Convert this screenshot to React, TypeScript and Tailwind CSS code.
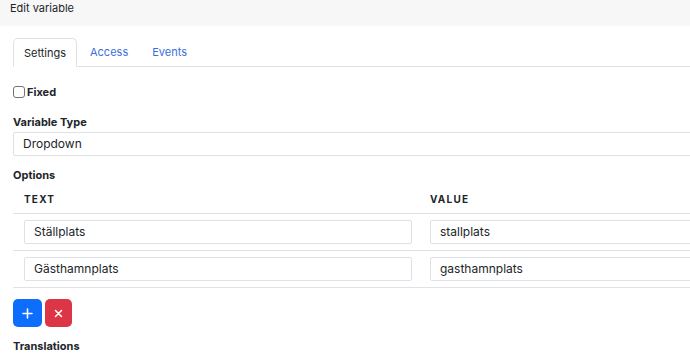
import React from "react"

type Option = { text: string; value: string }

const options: Option[] = [
  { text: "Ställplats", value: "stallplats" },
  { text: "Gästhamnplats", value: "gasthamnplats" },
]

const font = { fontFamily: "Inter, 'Noto Sans', sans-serif" }

function Field({ value, className = "" }: { value: string; className?: string }) {
  return (
    <div
      className={`flex h-[24px] items-center rounded-[2px] border border-[#dee2e6] bg-white px-[9px] text-[12px] text-[#212529] ${className}`}
    >
      {value}
    </div>
  )
}

export default function App() {
  return (
    <div className="h-[356px] w-[690px] overflow-hidden bg-white text-[#212529]" style={font}>
      <div className="w-[800px]">
        {/* Modal header */}
        <div className="h-[26px] bg-[#f7f7f7] px-[10px] text-[11px] leading-[16px]">Edit variable</div>

        <div className="pl-[13px]">
          {/* Tabs */}
          <div className="mt-[12px] flex h-[29px] border-b border-[#dee2e6] text-[11px]">
            <div className="-mb-px flex h-[29px] w-[64px] items-center justify-center rounded-t-[5px] border border-b-white border-[#dee2e6] bg-white pt-px">
              Settings
            </div>
            <div className="flex items-center pt-px pr-[12px] pl-[13px] text-[#3a6fdc]">Access</div>
            <div className="flex items-center pt-px px-[12px] text-[#3a6fdc]">Events</div>
          </div>

          {/* Fixed */}
          <div className="mt-[19px] flex h-[12px] items-center gap-[2px]">
            <span className="h-[12px] w-[12px] rounded-[3px] border border-[#6c757d] bg-white" />
            <span className="text-[11px] font-bold leading-[14px]">Fixed</span>
          </div>

          {/* Variable type */}
          <div className="mt-[17px] text-[11px] font-bold leading-[14px]">Variable Type</div>
          <Field value="Dropdown" className="mt-[3px]" />

          {/* Options */}
          <div className="mt-[12px] text-[11px] font-bold leading-[14px]">Options</div>
          <div className="mt-px">
            <div className="grid grid-cols-[408px_1fr] border-b border-[#dee2e6] pt-[9px] pb-[7px] text-[10px] font-bold leading-[14px] tracking-[0.12em]">
              <div className="pl-[11px]">TEXT</div>
              <div className="pl-[9px]">VALUE</div>
            </div>
            {options.map((o) => (
              <div key={o.value} className="grid grid-cols-[408px_1fr] border-b border-[#dee2e6] py-[6px]">
                <div className="pr-[9px] pl-[11px]">
                  <Field value={o.text} />
                </div>
                <div className="pl-[9px]">
                  <Field value={o.value} />
                </div>
              </div>
            ))}
          </div>

          {/* Add / remove */}
          <div className="mt-[11px] flex gap-[3px]">
            <button className="flex h-[28px] w-[29px] items-center justify-center rounded-[5px] bg-[#0d6efd] text-white">
              <svg width="11" height="11" viewBox="0 0 11 11" stroke="currentColor" strokeWidth="1.6" strokeLinecap="round">
                <path d="M5.5 1v9M1 5.5h9" />
              </svg>
            </button>
            <button className="flex h-[28px] w-[27px] items-center justify-center rounded-[5px] bg-[#dc3545] text-white">
              <svg width="9" height="9" viewBox="0 0 9 9" stroke="currentColor" strokeWidth="1.5" strokeLinecap="round">
                <path d="M1.5 1.5l6 6M7.5 1.5l-6 6" />
              </svg>
            </button>
          </div>

          <div className="mt-[12px] text-[11px] font-bold leading-[14px]">Translations</div>
        </div>
      </div>
    </div>
  )
}
